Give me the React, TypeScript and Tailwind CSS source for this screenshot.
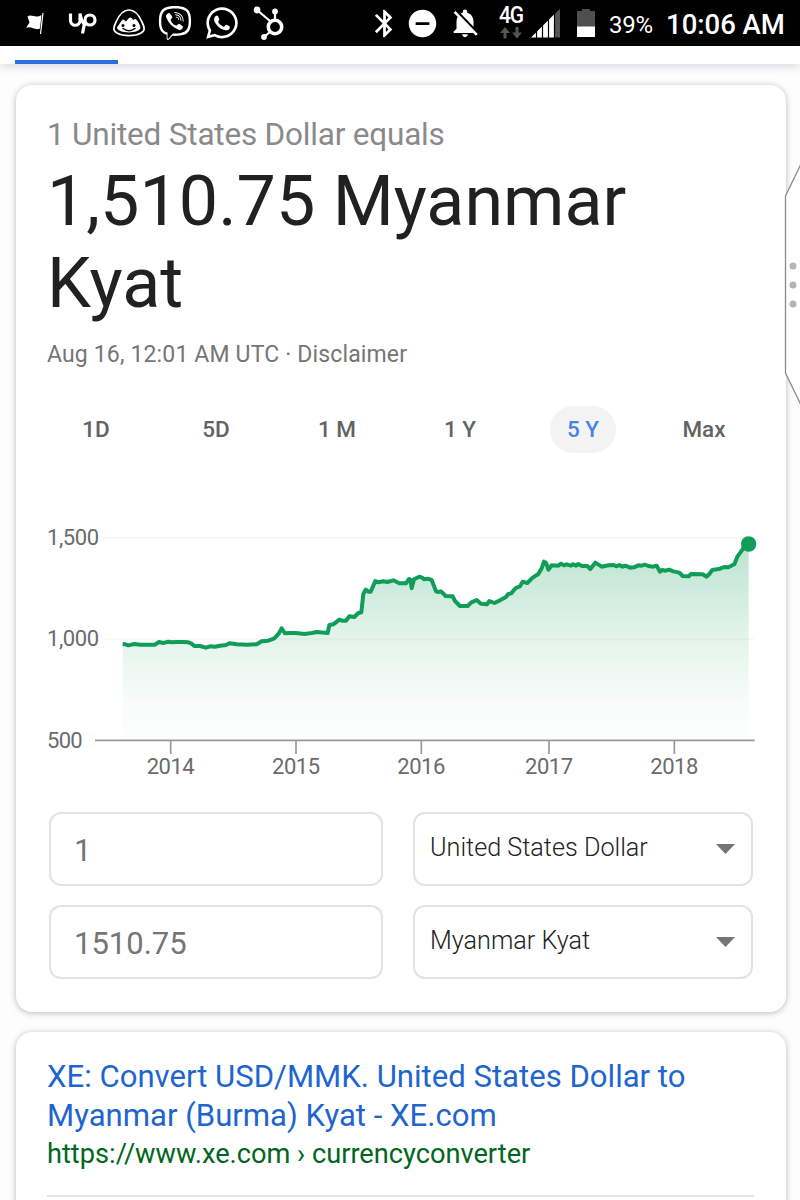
import { FaViber, FaWhatsapp } from "react-icons/fa";
import {
  MdBluetooth,
  MdDoNotDisturbOn,
  MdNotificationsOff,
} from "react-icons/md";

const periods = [
  { label: "1D", className: "w-[62px] ml-[18px]" },
  { label: "5D", className: "w-[62px] ml-[58px]" },
  { label: "1 M", className: "w-[70px] ml-[55px]" },
  { label: "1 Y", className: "w-[66px] ml-[55px]" },
  { label: "5 Y", className: "w-[66px] ml-[57px]", active: true },
  { label: "Max", className: "w-[80px] ml-[48px]" },
];

const years = [
  { label: "2014", x: 392 },
  { label: "2015", x: 768 },
  { label: "2016", x: 1144 },
  { label: "2017", x: 1527 },
  { label: "2018", x: 1903 },
];

const rates =
  "248,372 256,373 265,376 283,372 300,374 325,374 345,374 357,366 370,369 385,365 395,367 410,366 430,366 445,367 455,371 463,378 480,378 498,383 510,379 525,380 540,377 558,375 568,370 580,371 590,373 620,374 650,373 665,364 685,362 703,355 716,341 725,325 735,340 750,339 768,339 793,342 815,339 830,336 863,339 868,315 880,313 898,299 906,302 918,302 928,289 943,291 955,279 964,277 970,222 977,209 985,215 992,215 1006,183 1015,187 1030,184 1042,186 1060,181 1078,190 1098,190 1107,177 1112,180 1115,205 1122,178 1138,170 1145,172 1153,178 1163,176 1175,180 1188,214 1195,216 1203,214 1217,228 1238,229 1245,243 1260,258 1283,258 1293,248 1310,240 1323,251 1341,253 1348,243 1363,249 1380,241 1398,231 1405,222 1414,220 1425,206 1432,202 1440,199 1448,185 1455,187 1462,189 1478,173 1495,162 1505,145 1512,125 1518,128 1525,149 1535,136 1555,137 1563,131 1572,136 1580,133 1592,137 1599,133 1608,137 1614,132 1626,138 1642,138 1651,147 1658,138 1666,128 1685,140 1705,136 1720,135 1730,139 1738,135 1748,140 1756,137 1770,143 1782,142 1795,136 1805,137 1815,134 1825,138 1840,140 1850,137 1860,155 1867,150 1877,152 1887,149 1900,154 1918,158 1928,168 1946,169 1953,162 1988,163 2000,170 2008,162 2017,150 2040,146 2052,141 2065,142 2083,133 2092,110 2110,85 2126,73";

const StatusBar = () => (
  <header className="flex h-[46px] w-full shrink-0 items-center bg-black text-white">
    <svg className="ml-[26px] h-[23px] w-[18px] shrink-0" viewBox="0 0 18 23">
      <path
        d="M1.500 4.500c4-3 8 2.500 14-1.500l-1.500 13.500C9 19 5 13.500 0 16l3.500-5.500z"
        fill="white"
      />
      <path d="M17 1l-2.500 21" stroke="white" strokeWidth="1.200" />
    </svg>
    <svg
      className="ml-[24px] h-[24px] w-[30px] shrink-0"
      viewBox="0 0 30 24"
      fill="none"
      stroke="white"
      strokeWidth="3.200"
    >
      <path d="M2.500 2.500v7a4.700 4.700 0 0 0 9.500 0V2.500c1 7 3 10 6 12" />
      <circle cx="22" cy="9" r="5" />
      <path d="M17 9.500l-2.500 13" />
    </svg>
    <svg
      className="ml-[14px] h-[30px] w-[34px] shrink-0"
      viewBox="0 0 34 30"
      fill="none"
    >
      <path
        d="M17 2C11 2 7 7 4 14c-3 6-3 9 1 11 6 3.500 18 3.500 24 0 4-2 4-5 1-11C27 7 23 2 17 2z"
        stroke="white"
        strokeWidth="1.700"
      />
      <path
        d="M5 19.500l5-7.500c1.500-1.500 2.500 0 4 1.500l3-3.500c1.500-1.500 3 0 4 2l2-1c2 0 4.500 4.500 5.500 8.500-1 6.500-22.500 6.500-23.500 0z"
        fill="white"
      />
      <path
        d="M11 20.500q6 4.500 12 0"
        stroke="black"
        strokeWidth="1.500"
        strokeLinecap="round"
      />
      <circle cx="11" cy="17.500" r="1.500" fill="black" />
      <circle cx="22" cy="17.500" r="1.500" fill="black" />
    </svg>
    <FaViber className="ml-[12px] size-[34px] shrink-0" />
    <FaWhatsapp className="ml-[12px] size-[36px] shrink-0" />
    <svg
      className="ml-[13px] h-[34px] w-[32px] shrink-0"
      viewBox="0 0 32 34"
      fill="none"
      stroke="white"
    >
      <circle cx="22" cy="21" r="6.700" strokeWidth="3.600" />
      <path d="M4 4l13 11M22 6v9M17 26l-6 5" strokeWidth="2.200" />
      <circle cx="4" cy="4" r="3.400" fill="white" stroke="none" />
      <circle cx="22" cy="5.500" r="2.900" fill="white" stroke="none" />
      <circle cx="11" cy="31" r="2.900" fill="white" stroke="none" />
    </svg>

    <MdBluetooth className="ml-[83px] size-[33px] shrink-0" />
    <MdDoNotDisturbOn className="ml-[5px] size-[33px] shrink-0" />
    <MdNotificationsOff className="ml-[9px] size-[34px] shrink-0" />
    <div className="ml-[16px] flex w-[26px] shrink-0 flex-col items-center">
      <span className="origin-bottom scale-y-110 text-[21px] leading-[18px] font-medium tracking-[-1px]">
        4G
      </span>
      <svg className="mt-[2px] h-[12px] w-[24px]" viewBox="0 0 24 12" fill="#555">
        <path d="M6 0l5 6H7.500v5.500h-3V6H1zM18 11.500l5-6h-3.500V0h-3v5.500H13z" />
      </svg>
    </div>
    <svg className="ml-[7px] h-[29px] w-[29px] shrink-0" viewBox="0 0 29 29">
      <path d="M0 28.500L24 4.500V28.500z" fill="white" />
      <path d="M24 4.500L29 0v28.500h-5z" fill="#555" />
      <path
        d="M5.500 18v11M11.500 12v17M17.500 6v23M23.500 0v29"
        stroke="black"
        strokeWidth="1.200"
      />
    </svg>
    <svg className="ml-[17px] h-[28px] w-[18px] shrink-0" viewBox="0 0 18 28">
      <path d="M5 0h8v2h5v16H0V2h5z" fill="#4f4f4f" />
      <path d="M0 17.500h18V28H0z" fill="white" />
    </svg>
    <span className="ml-[14px] w-[46px] shrink-0 pt-[3px] text-[24px] tracking-[-0.3px]">
      39%
    </span>
    <span className="ml-[11px] pt-[4px] text-[27.5px] font-medium whitespace-nowrap">
      10:06 AM
    </span>
  </header>
);

const RateChart = () => (
  <svg
    className="-ml-[7px] mt-[67px] h-[260px] w-[720px] shrink-0"
    viewBox="0 0 2160 780"
    fill="#6b6b6b"
    fontSize="66"
  >
    <defs>
      <linearGradient
        id="area"
        gradientUnits="userSpaceOnUse"
        x1="0"
        y1="73"
        x2="0"
        y2="661"
      >
        <stop offset="0" stopColor="#0f9d58" stopOpacity="0.28" />
        <stop offset="0.5" stopColor="#0f9d58" stopOpacity="0.11" />
        <stop offset="0.8" stopColor="#0f9d58" stopOpacity="0.03" />
        <stop offset="1" stopColor="#0f9d58" stopOpacity="0.01" />
      </linearGradient>
    </defs>
    <path d="M188 53H2142M188 357H2142" stroke="#f2f2f2" strokeWidth="3" />
    <polygon points={`248,661 ${rates} 2126,661`} fill="url(#area)" />
    <path
      d="M165 661H2144M392 661v41M768 661v41M1144 661v41M1527 661v41M1903 661v41"
      stroke="#999"
      strokeWidth="5"
    />
    <polyline
      points={rates}
      fill="none"
      stroke="#109d58"
      strokeWidth="12"
      strokeLinejoin="round"
    />
    <circle cx="2126" cy="72" r="23" fill="#0f9d58" />
    <text x="21" y="76" textLength="156">
      1,500
    </text>
    <text x="21" y="379" textLength="156">
      1,000
    </text>
    <text x="21" y="683" textLength="107">
      500
    </text>
    {years.map(({ label, x }) => (
      <text key={label} x={x} y="761" textAnchor="middle" textLength="144">
        {label}
      </text>
    ))}
  </svg>
);

const Amount = ({ value }: { value: string }) => (
  <div className="flex h-[74px] items-center rounded-[12px] border-2 border-[#e2e2e7] pt-[4px] pl-[23px] text-[31px] text-[#757575]">
    {value}
  </div>
);

const Currency = ({ name }: { name: string }) => (
  <div className="flex h-[74px] items-center justify-between rounded-[12px] border-2 border-[#e2e2e7] pr-4 pl-[15px] text-[25.2px] font-light text-[#222]">
    <span className="pb-[3px]">{name}</span>
    <svg className="h-[10px] w-[19px]" viewBox="0 0 19 10">
      <path d="M0 0h19l-9.500 10z" fill="#757575" />
    </svg>
  </div>
);

const EdgeHandle = () => (
  <svg
    className="absolute top-[165px] right-0 h-[240px] w-[16px]"
    viewBox="0 0 16 240"
  >
    <path
      d="M16.500 0L1.500 31V208L16.500 239"
      fill="white"
      stroke="#8c8c8c"
      strokeWidth="1.300"
    />
    <g fill="#b5b5b5">
      <circle cx="9" cy="101" r="3.500" />
      <circle cx="9" cy="120" r="3.500" />
      <circle cx="9" cy="139" r="3.500" />
    </g>
  </svg>
);

export default function App() {
  return (
    <div className="relative flex h-[1200px] w-[800px] flex-col overflow-hidden bg-[#fdfdfd] font-['Roboto',sans-serif]">
      <StatusBar />
      <nav className="flex h-[18px] shrink-0 items-end bg-white pl-[15px] shadow-[0_2px_10px_rgba(60,64,90,0.2)]">
        <div className="h-[4px] w-[103px] bg-[#2a6fdb]" />
      </nav>

      <main className="mt-[21px] flex flex-col gap-[20px] pr-[14px] pl-[16px]">
        <section className="flex h-[927px] flex-col rounded-[16px] bg-white px-[31px] shadow-[0_1px_6px_rgba(0,0,0,0.28)]">
          <p className="mt-[31px] text-[31.5px] leading-[38px] tracking-[-0.2px] whitespace-nowrap text-[#8a8a8a]">
            1 United States Dollar equals
          </p>
          <h1 className="mt-[6px] text-[70px] leading-[82px] text-[#212121]">
            1,510.75 Myanmar
            <br />
            Kyat
          </h1>
          <p className="mt-[17px] text-[23px] leading-[28px] tracking-[0.15px] whitespace-nowrap text-[#757575]">
            Aug 16, 12:01 AM UTC · Disclaimer
          </p>

          <div className="mt-[37px] flex h-[47px] shrink-0">
            {periods.map(({ label, className, active }) => (
              <button
                key={label}
                className={`${className} shrink-0 rounded-full text-[22.5px] font-medium whitespace-nowrap ${
                  active ? "bg-[#f3f3f3] text-[#4a80e8]" : "text-[#636363]"
                }`}
              >
                {label}
              </button>
            ))}
          </div>

          <RateChart />

          <div className="mt-[32px] ml-[2px] grid w-[704px] grid-cols-[334px_340px] gap-x-[30px] gap-y-[19px]">
            <Amount value="1" />
            <Currency name="United States Dollar" />
            <Amount value="1510.75" />
            <Currency name="Myanmar Kyat" />
          </div>
        </section>

        <section className="h-[220px] rounded-[16px] bg-white px-[31px] pt-[25px] shadow-[0_1px_6px_rgba(0,0,0,0.28)]">
          <h2 className="text-[31.1px] leading-[39px] whitespace-nowrap text-[#1f65cf]">
            XE: Convert USD/MMK. United States Dollar to
            <br />
            Myanmar (Burma) Kyat - XE.com
          </h2>
          <p className="text-[27.2px] leading-[38px] whitespace-nowrap text-[#006621]">
            https://www.xe.com › currencyconverter
          </p>
          <hr className="mt-[22px] w-[707px] border-t-2 border-[#e3e3e3]" />
        </section>
      </main>

      <EdgeHandle />
    </div>
  );
}
